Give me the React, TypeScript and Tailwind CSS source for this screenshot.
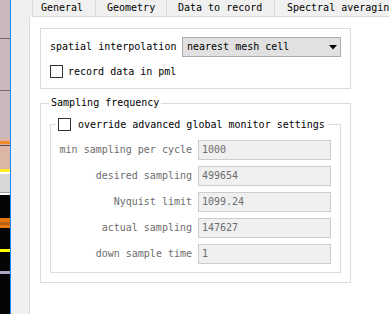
import React from "react";

const Strip = () => (
  <div className="flex w-[10px] shrink-0 flex-col">
    <div className="h-[38px] bg-[#cbb8bd]" />
    <div className="h-px bg-[#6f6a6b]" />
    <div className="h-[51px] bg-[#cbb8bd]" />
    <div className="h-px bg-[#6f6a6b]" />
    <div className="h-[47px] bg-[#cbb8bd]" />
    <div className="h-[3px] bg-[#d6b3a6]" />
    <div className="h-[3px] bg-[#f08a2a]" />
    <div className="h-px bg-[#d6b3a6]" />
    <div className="h-px bg-[#5a4a44]" />
    <div className="h-[23px] bg-[#dbb6a6]" />
    <div className="h-[3px] bg-[#ffee22]" />
    <div className="h-[2px] bg-[#ffffff]" />
    <div className="h-[18px] bg-[#d8d8d8]" />
    <div className="h-px bg-[#a0a0a0]" />
    <div className="h-[2px] bg-[#ffffff]" />
    <div className="h-[23px] bg-[#050505]" />
    <div className="h-[4px] bg-[#e6760e]" />
    <div className="h-[3px] bg-[#b8600e]" />
    <div className="h-[3px] bg-[#e6760e]" />
    <div className="h-[21px] bg-[#050505]" />
    <div className="h-[3px] bg-[#ffff00]" />
    <div className="h-[19px] bg-[#050505]" />
    <div className="h-[3px] bg-[#a9a9c6]" />
    <div className="flex-1 bg-[#050505]" />
  </div>
);

const CheckBox = () => (
  <div className="h-[13px] w-[13px] shrink-0 border border-[#333333] bg-white" />
);

const Row = ({ label, value }: { label: string; value: string }) => (
  <div className="flex items-center justify-end gap-[6px]">
    <span className="whitespace-nowrap text-[#6d6d6d]">{label}</span>
    <div className="flex h-[20px] w-[133px] items-center border border-[#cccccc] bg-[#f0f0f0] pl-[3px] text-[#6d6d6d]">
      {value}
    </div>
  </div>
);

export default function App() {
  return (
    <div className="flex h-[314px] w-[389px] overflow-hidden bg-white font-['DejaVu_Sans_Mono',monospace] text-[10px] leading-none text-black">
      <Strip />
      <div className="w-px shrink-0 bg-[#1a8cff]" />
      <div className="w-[18px] shrink-0 bg-[#f0f0f0]" />
      <div className="flex min-w-0 flex-1 flex-col">
        <div className="flex h-[17px] shrink-0 bg-[#f0f0f0] pl-[3px]">
          <div className="flex w-[63px] shrink-0 items-center border-b border-l border-[#d9d9d9] pl-[8px]">General</div>
          <div className="flex w-[71px] shrink-0 items-center border-b border-l border-[#d9d9d9] pl-[11px]">Geometry</div>
          <div className="flex w-[108px] shrink-0 items-center border-b border-l border-[#d9d9d9] pl-[11px]">Data to record</div>
          <div className="flex min-w-0 flex-1 items-center overflow-hidden whitespace-nowrap border-b border-l border-[#d9d9d9] pl-[12px]">Spectral averaging</div>
        </div>
        <div className="flex flex-1 flex-col border-l border-[#dadada] bg-white pl-[10px] pt-[11px]">
          <div className="flex w-[311px] flex-col gap-[8px] border border-[#dcdcdc] pb-[10px] pl-[9px] pt-[8px]">
            <div className="flex items-center">
              <span className="w-[132px] whitespace-nowrap">spatial interpolation</span>
              <div className="flex h-[20px] w-[159px] items-center justify-between border border-[#adadad] bg-[#e1e1e1] pl-[4px] pr-[3px]">
                <span>nearest mesh cell</span>
                <svg width="8" height="5" viewBox="0 0 8 5">
                  <path d="M0 0 H8 L4 4.5 Z" fill="#000" />
                </svg>
              </div>
            </div>
            <div className="flex items-center gap-[5px]">
              <CheckBox />
              <span>record data in pml</span>
            </div>
          </div>

          <div className="relative mt-[14px] w-[311px] border border-[#dcdcdc] pb-[9px] pl-[9px] pr-[9px] pt-[20px]">
            <div className="absolute left-[8px] top-[-6px] bg-white px-[2px]">Sampling frequency</div>
            <div className="relative flex flex-col gap-[6px] border border-[#dcdcdc] pb-[8px] pr-[9px] pt-[15px]">
              <div className="absolute left-[5px] top-[-7px] flex items-center gap-[7px] bg-white px-[2px]">
                <CheckBox />
                <span>override advanced global monitor settings</span>
              </div>
              <Row label="min sampling per cycle" value="1000" />
              <Row label="desired sampling" value="499654" />
              <Row label="Nyquist limit" value="1099.24" />
              <Row label="actual sampling" value="147627" />
              <Row label="down sample time" value="1" />
            </div>
          </div>
        </div>
      </div>
    </div>
  );
}
